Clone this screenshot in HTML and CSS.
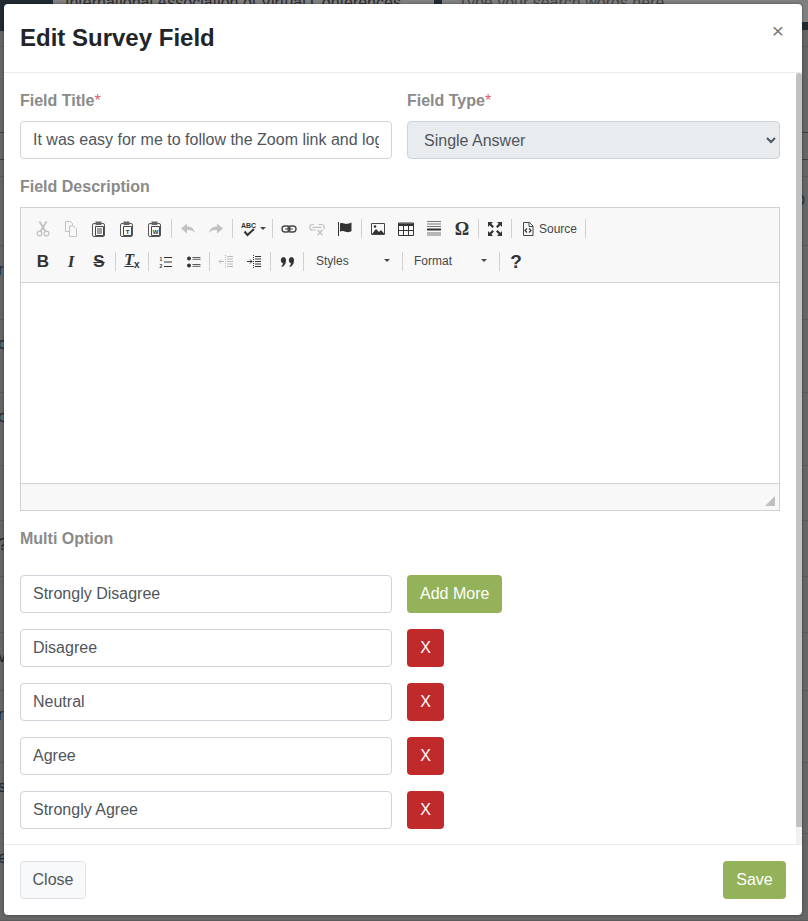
FILE: index.html
```html
<!DOCTYPE html>
<html lang="en">
<head>
<meta charset="utf-8">
<title>Edit Survey Field</title>
<link rel="stylesheet" href="styles.css">
</head>
<body>
<div class="page">
  <div class="page-top">
    <div class="page-brand"></div>
    <div class="page-site">International Association of Virtual Conferences</div>
    <div class="page-mark"></div>
    <div class="page-search">Type your search words here</div>
  </div>
  <div class="page-rows">
    <div class="page-row h17"></div>
    <div class="page-row h86 dark"></div>
    <div class="page-row h27 dark"></div>
    <div class="page-row h17"></div>
    <div class="page-row h69"><em class="tail">D</em></div>
    <div class="page-row h74"><span>r</span></div>
    <div class="page-row h73"><span>c</span></div>
    <div class="page-row h73"><span>o</span></div>
    <div class="page-row h55"></div>
    <div class="page-row h56"><span>?</span></div>
    <div class="page-row h56"></div>
    <div class="page-row h58"><span>v</span></div>
    <div class="page-row h72"><span>r</span></div>
    <div class="page-row h71"><span>s</span></div>
    <div class="page-row h87"><span>e</span></div>
  </div>
</div>

<div class="modal">
  <header class="modal-header">
    <h1 class="modal-title">Edit Survey Field</h1>
    <span class="modal-close">×</span>
  </header>
  <div class="modal-body">
    <div class="two-col">
      <div class="field">
        <label class="label">Field Title<span class="req">*</span></label>
        <input class="input" type="text" value="It was easy for me to follow the Zoom link and log in">
      </div>
      <div class="field">
        <label class="label">Field Type<span class="req">*</span></label>
        <select class="input select"><option>Single Answer</option></select>
      </div>
    </div>

    <div class="field">
      <label class="label">Field Description</label>
      <div class="editor">
        <div class="toolbar">
          <div class="tb-row">
            <span class="tb off"><svg viewBox="0 0 16 16"><path d="M4.500 .5l6 10M11.500 .5l-6 10" fill="none" stroke="#474747" stroke-width="1.800"/><circle cx="4.500" cy="12.500" r="2.300" fill="none" stroke="#474747" stroke-width="1.300"/><circle cx="11.500" cy="12.500" r="2.300" fill="none" stroke="#474747" stroke-width="1.300"/></svg></span>
            <span class="tb off"><svg viewBox="0 0 16 16"><path d="M2.500 .5h5l2 2v2M2.500 .5v10h3.500M6.500 5h4l3 3v7.500h-7z" fill="none" stroke="#474747"/></svg></span>
            <span class="tb"><svg viewBox="0 0 16 16"><rect x="1.500" y="2.500" width="12" height="13" rx="1.500" fill="none" stroke="#555"/><path d="M4.500 .5h6v3.500h-6z" fill="#666"/><path d="M4.500 5.500h8v9h-8zM6 8h5M6 10h5M6 12h5" fill="#f8f8f8" stroke="#474747"/></svg></span>
            <span class="tb"><svg viewBox="0 0 16 16"><rect x="1.500" y="2.500" width="12" height="13" rx="1.500" fill="none" stroke="#555"/><path d="M4.500 .5h6v3.500h-6z" fill="#666"/><path d="M4.500 5.500h8v9h-8z" fill="#f8f8f8" stroke="#474747"/><text x="8.500" y="13" class="svg-t">T</text></svg></span>
            <span class="tb"><svg viewBox="0 0 16 16"><rect x="1.500" y="2.500" width="12" height="13" rx="1.500" fill="none" stroke="#555"/><path d="M4.500 .5h6v3.500h-6z" fill="#666"/><path d="M4.500 5.500h8v9h-8z" fill="#f8f8f8" stroke="#474747"/><text x="8.500" y="13" class="svg-t">W</text></svg></span>
            <i class="sep"></i>
            <span class="tb off"><svg viewBox="0 0 16 16"><path d="M1 7.500l6-5v3c4 0 7 2 8 6.500-2-2.500-4-3-8-3v3.500z" fill="#474747"/></svg></span>
            <span class="tb off"><svg viewBox="0 0 16 16"><path d="M15 7.500l-6-5v3c-4 0-7 2-8 6.500 2-2.500 4-3 8-3v3.500z" fill="#474747"/></svg></span>
            <i class="sep"></i>
            <span class="tb tb-spell"><svg viewBox="0 0 16 16"><text x="7.500" y="6.500" class="svg-abc">ABC</text><path d="M3.500 10.500l3 3.500 6.500-6" fill="none" stroke="#333" stroke-width="2"/></svg><b class="caret"></b></span>
            <i class="sep"></i>
            <span class="tb"><svg viewBox="0 0 16 16"><rect x="1" y="5" width="8" height="6" rx="3" fill="none" stroke="#474747" stroke-width="1.400"/><rect x="7" y="5" width="8" height="6" rx="3" fill="none" stroke="#474747" stroke-width="1.400"/><path d="M4 8h8" stroke="#474747"/></svg></span>
            <span class="tb off"><svg viewBox="0 0 16 16"><path d="M5 3.500h-1.500a2.700 2.700 0 0 0 0 5.500h3M9.500 3.500h3a2.700 2.700 0 0 1 2 4.500M3.500 6.300h9" fill="none" stroke="#474747" stroke-width="1.200"/><path d="M8.500 9l5 5M13.500 9l-5 5" stroke="#474747" stroke-width="1.300"/></svg></span>
            <span class="tb"><svg viewBox="0 0 16 16"><path d="M1.500 1v14" stroke="#333" stroke-width="1"/><path d="M3 2.500c3-1.500 4.500 1 7.500.3 1.500-.3 3-.8 4-1.300v8.500c-3 2-6 1-7.500.3-1.500-.5-3-.3-4 .2z" fill="#333"/></svg></span>
            <i class="sep"></i>
            <span class="tb"><svg viewBox="0 0 16 16"><path d="M1.500 2.500h13v11h-13z" fill="none" stroke="#474747"/><path d="M2 13l4-5 3 3 2-2 3.500 4z" fill="#333"/><circle cx="5" cy="5.500" r="1.300" fill="#333"/></svg></span>
            <span class="tb"><svg viewBox="0 0 16 16"><path d="M.500 2h15v12.500h-15z" fill="none" stroke="#333"/><path d="M.500 2.500h15v2.500h-15z" fill="#333"/><path d="M5.500 5v9M10.500 5v9M.5 9.500h15" stroke="#333"/></svg></span>
            <span class="tb"><svg viewBox="0 0 16 16"><path d="M1 .5h14M1 3h14M1 5.500h14M1 12h14M1 14h14" stroke="#777"/><path d="M1 8.500h14" stroke="#333" stroke-width="2"/></svg></span>
            <span class="tb"><span class="glyph omega">Ω</span></span>
            <i class="sep"></i>
            <span class="tb"><svg viewBox="0 0 16 16"><path d="M1 1h5l-1.700 1.700 2.700 2.700-1.600 1.600-2.700-2.700L1 6zM15 1v5l-1.700-1.700-2.700 2.700-1.600-1.600 2.700-2.700L10 1zM1 15v-5l1.700 1.700 2.700-2.700 1.600 1.600-2.700 2.700L6 15zM15 15h-5l1.700-1.700-2.700-2.700 1.600-1.600 2.700 2.700L15 10z" fill="#333"/></svg></span>
            <i class="sep"></i>
            <span class="tb tb-source"><svg viewBox="0 0 16 16"><path d="M3.500 1.500h6l3.500 3.500v9.500h-9.500zM9 1.500v4h4" fill="none" stroke="#474747"/><path d="M7 7.500l-2 2 2 2M9 7.500l2 2-2 2" fill="none" stroke="#333" stroke-width="1.200"/></svg><span class="tb-text">Source</span></span>
            <i class="sep"></i>
          </div>
          <div class="tb-row">
            <span class="tb"><span class="glyph bold">B</span></span>
            <span class="tb"><span class="glyph ital">I</span></span>
            <span class="tb"><span class="glyph strike">S</span></span>
            <i class="sep"></i>
            <span class="tb"><span class="glyph clear"><u>T</u><small>x</small></span></span>
            <i class="sep"></i>
            <span class="tb"><svg viewBox="0 0 16 16"><path d="M7 3.500h8M7 8h8M7 12.500h8" stroke="#333" stroke-width="1.200"/><text x="4" y="6.500" class="svg-n">1</text><text x="4" y="13.500" class="svg-n">2</text></svg></span>
            <span class="tb"><svg viewBox="0 0 16 16"><path d="M7.500 3.500h8M7.500 5.300h8M7.500 10.500h8M7.500 12.300h8" stroke="#333" stroke-width=".8"/><circle cx="4" cy="4.500" r="2" fill="#333"/><circle cx="4" cy="11.500" r="2" fill="#333"/></svg></span>
            <i class="sep"></i>
            <span class="tb off"><svg viewBox="0 0 16 16"><path d="M9 2.500h6M9 5h6M9 7.500h6M9 10h6M9 12.500h6" stroke="#333"/><path d="M7.500 1v14" stroke="#333" stroke-dasharray="1 1"/><path d="M1 7.500h5M3 5.500l-2 2 2 2" fill="none" stroke="#333"/></svg></span>
            <span class="tb"><svg viewBox="0 0 16 16"><path d="M9 2.500h6M9 5h6M9 7.500h6M9 10h6M9 12.500h6" stroke="#333"/><path d="M7.500 1v14" stroke="#333" stroke-dasharray="1 1"/><path d="M1 7.500h5M4 5.500l2 2-2 2" fill="none" stroke="#333"/></svg></span>
            <i class="sep"></i>
            <span class="tb"><svg viewBox="0 0 16 16"><path d="M4 3a3 3 0 0 1 3 3.500c0 3-1.500 5.500-4 6.500l-.7-1c1-.7 1.500-1.500 1.700-2.600A3.400 3.400 0 0 1 4 3zM12 3a3 3 0 0 1 3 3.500c0 3-1.500 5.500-4 6.500l-.7-1c1-.7 1.500-1.500 1.700-2.600A3.400 3.400 0 0 1 12 3z" fill="#333"/></svg></span>
            <i class="sep"></i>
            <span class="combo c-styles"><span class="tb-text">Styles</span><b class="caret"></b></span>
            <i class="sep"></i>
            <span class="combo c-format"><span class="tb-text">Format</span><b class="caret"></b></span>
            <i class="sep"></i>
            <span class="tb"><span class="glyph help">?</span></span>
          </div>
        </div>
        <div class="editor-content"></div>
        <div class="editor-foot"><i class="resizer"></i></div>
      </div>
    </div>

    <div class="field multi-head">
      <label class="label">Multi Option</label>
    </div>
    <div class="two-col opt"><input class="input" type="text" value="Strongly Disagree"><div><button class="btn green">Add More</button></div></div>
    <div class="two-col opt"><input class="input" type="text" value="Disagree"><div><button class="btn red">X</button></div></div>
    <div class="two-col opt"><input class="input" type="text" value="Neutral"><div><button class="btn red">X</button></div></div>
    <div class="two-col opt"><input class="input" type="text" value="Agree"><div><button class="btn red">X</button></div></div>
    <div class="two-col opt"><input class="input" type="text" value="Strongly Agree"><div><button class="btn red">X</button></div></div>
    <div class="scrollbar"><div class="scrollbar-thumb"></div></div>
  </div>
  <footer class="modal-footer">
    <button class="btn light close">Close</button>
    <button class="btn green save">Save</button>
  </footer>
</div>
</body>
</html>
```

FILE: styles.css
```css
* { box-sizing: border-box; }
html, body { margin: 0; height: 921px; overflow: hidden; }
body {
  position: relative;
  background: #646464;
  font-family: "Liberation Sans", Arial, sans-serif;
  font-size: 16px;
  line-height: 1.5;
  color: #212529;
}

/* dimmed page behind the modal */
.page { position: absolute; inset: 0; overflow: hidden; background: #666; }
.page-top { display: flex; height: 22px; background: #808080; color: #2b2b2b; }
.page-brand { width: 53px; height: 31px; background: #1f2a33; flex: none; }
.page-site { margin-left: 12px; margin-top: -9px; width: 369px; font-size: 16px; white-space: nowrap; overflow: hidden; }
.page-mark { width: 8px; height: 8px; background: #1f2a33; flex: none; }
.page-search { margin-left: 16px; margin-top: -9px; color: #444; white-space: nowrap; }
.page-rows { border-top: 8px solid #1f2a33; }
.page-row { display: flex; justify-content: space-between; border-bottom: 1px solid #5a5a5a; padding-top: 12px; font-size: 16px; color: #1b2733; overflow: hidden; }
.page-row span { display: block; margin-left: -2px; }
.page-row .tail { margin-left: auto; margin-right: 3px; font-style: normal; color: #1f3550; }
.dark { border-bottom-color: #3f3f3f; }
.h17 { height: 17px; }
.h27 { height: 27px; }
.h55 { height: 55px; }
.h56 { height: 56px; }
.h58 { height: 58px; }
.h69 { height: 69px; }
.h71 { height: 71px; }
.h72 { height: 72px; }
.h73 { height: 73px; }
.h74 { height: 74px; }
.h86 { height: 86px; }
.h87 { height: 87px; }

/* modal */
.modal {
  position: absolute;
  left: 4px;
  top: 4px;
  width: 798px;
  height: 911px;
  display: flex;
  flex-direction: column;
  background: #fff;
  border-radius: 4px;
  overflow: hidden;
  box-shadow: 0 0 3px rgba(0, 0, 0, .45);
}
.modal-header {
  flex: none;
  height: 69px;
  display: flex;
  justify-content: space-between;
  padding: 16px;
  border-bottom: 1px solid #e9ecef;
}
.modal-title { margin: 0; font-size: 24px; font-weight: 700; line-height: 36px; color: #212529; }
.modal-close { font-size: 21px; font-weight: 400; line-height: 21px; color: #777; margin: 0 2px 0 0; }

.modal-body {
  position: relative;
  flex: 1;
  min-height: 0;
  overflow: hidden;
  padding: 16px 22px 15px 16px;
}
.scrollbar { position: absolute; top: 0; right: 0; bottom: 0; width: 6px; background: #f1f1f1; }
.scrollbar-thumb { height: 754px; background: #c1c1c1; border-radius: 3px 3px 0 0; }

.two-col { display: grid; grid-template-columns: 372px 373px; column-gap: 15px; }
.field { margin-bottom: 16px; }
.label { display: block; margin-bottom: 8px; font-weight: 700; color: #8a8a8a; height: 24px; }
.req { color: #e0606f; font-weight: 400; }
.input {
  display: block;
  width: 100%;
  height: 38px;
  padding: 6px 12px;
  border: 1px solid #ced4da;
  border-radius: 4px;
  background: #fff;
  color: #50565c;
  font: 16px/24px "Liberation Sans", Arial, sans-serif;
}
.select { background: #e9ecef; }
.multi-head { margin-bottom: 24px; }
.multi-head .label { margin-bottom: 0; }
.opt { margin-bottom: 16px; }

.btn {
  display: inline-block;
  height: 38px;
  padding: 6px 12px;
  border: 1px solid transparent;
  border-radius: 4px;
  font: 16px/24px "Liberation Sans", Arial, sans-serif;
  color: #fff;
}
.green { background: #93b25a; }
.red { background: #c02a2a; width: 37px; padding: 6px 0; }
.light { background: #f8f9fa; border-color: #dee2e6; color: #50565c; }
.close { width: 66px; padding: 6px 0; }
.save { width: 63px; padding: 6px 0; }

.modal-footer {
  flex: none;
  height: 71px;
  display: flex;
  justify-content: space-between;
  padding: 16px;
  border-top: 1px solid #e9ecef;
}

/* rich text editor */
.editor { height: 304px; border: 1px solid #d1d1d1; display: flex; flex-direction: column; }
.toolbar { flex: none; height: 75px; padding: 4px 0 4px 8px; background: #f8f8f8; border-bottom: 1px solid #d1d1d1; }
.tb-row { display: flex; align-items: center; height: 33px; }
.tb { flex: none; width: 28px; height: 22px; display: flex; align-items: center; justify-content: center; }
.tb svg { width: 16px; height: 16px; flex: none; display: block; }
.off { opacity: .3; }
.tb-spell { width: 35px; justify-content: flex-start; padding-left: 6px; gap: 3px; }
.tb-source { width: 69px; justify-content: flex-start; padding-left: 6px; gap: 3px; }
.tb-text { font-size: 12px; line-height: 16px; color: #474747; }
.sep { flex: none; width: 1px; height: 19px; margin: 0 2px; background: #d1d1d1; }
.caret { display: block; width: 0; height: 0; border: 3px solid transparent; border-top-color: #474747; border-bottom: 0; flex: none; }
.combo { flex: none; height: 22px; display: flex; align-items: center; justify-content: space-between; padding: 0 10px 2px 10px; }
.c-styles { width: 94px; }
.c-format { width: 92px; padding-left: 9px; }

.glyph { display: block; color: #333; line-height: 16px; text-align: center; }
.bold { font: 700 17px/16px "Liberation Sans", sans-serif; }
.ital { font: italic 700 17px/16px "Liberation Serif", serif; }
.strike { font: 700 17px/16px "Liberation Sans", sans-serif; text-decoration: line-through; text-decoration-thickness: 1px; }
.clear { font: italic 700 16px/16px "Liberation Serif", serif; margin-top: -2px; }
.clear small { font: 700 10px/10px "Liberation Sans", sans-serif; display: inline-block; vertical-align: -3px; }
.omega { font: 700 18px/16px "Liberation Serif", serif; }
.help { font: 700 19px/16px "Liberation Sans", sans-serif; }

.svg-t { font: 700 6px "Liberation Sans", sans-serif; fill: #333; text-anchor: middle; }
.svg-abc { font: 700 7px "Liberation Sans", sans-serif; fill: #333; text-anchor: middle; }
.svg-n { font: 700 5px "Liberation Sans", sans-serif; fill: #333; text-anchor: middle; }

.editor-content { flex: 1; background: #fff; }
.editor-foot { flex: none; height: 27px; position: relative; background: #f8f8f8; border-top: 1px solid #d1d1d1; }
.resizer {
  position: absolute;
  right: 4px;
  bottom: 4px;
  width: 0;
  height: 0;
  border-style: solid;
  border-width: 0 0 10px 10px;
  border-color: transparent transparent #bfbfbf transparent;
}
```
